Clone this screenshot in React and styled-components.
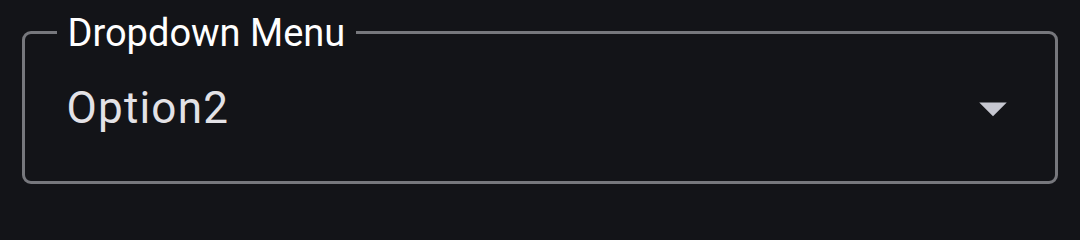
import React from 'react';
import styled, { createGlobalStyle } from 'styled-components';

const GlobalStyle = createGlobalStyle`
html, body {
  margin: 0;
  padding: 0;
  background: #131418;
}
body {
  font-family: Roboto, "Noto Sans", "Liberation Sans", sans-serif;
}
`

const Page = styled.div`
padding: 10.5px 22px 0 22px;
`

const Field = styled.fieldset`
margin: 0;
padding: 0 29.5px 47px 41.5px;
border: 3px solid #77787d;
border-radius: 9px;
min-width: 0;
`

const Label = styled.legend`
margin-left: -10px;
padding: 0 10.5px 0 11px;
font-size: 38px;
line-height: 44px;
color: #ffffff;
`

const Row = styled.div`
display: flex;
align-items: center;
justify-content: space-between;
height: 52px;
margin-top: 27px;
`

const Value = styled.span`
font-size: 44px;
line-height: 52px;
letter-spacing: 1.2px;
color: #e3e2e6;
`

const Arrow = styled.svg`
width: 66px;
height: 66px;
flex-shrink: 0;
fill: ${props => props.color};
`

const Dropdown = ({ label, value }) => {
    return (
        <Field>
            <Label>{label}</Label>
            <Row>
                <Value>{value}</Value>
                <Arrow viewBox="0 0 24 24" color="#c6c7d0">
                    <path d="M7 10l5 5 5-5z" />
                </Arrow>
            </Row>
        </Field>
    )
}

export default function App() {
    return (
        <>
            <GlobalStyle />
            <Page>
                <Dropdown label="Dropdown Menu" value="Option2" />
            </Page>
        </>
    )
}
